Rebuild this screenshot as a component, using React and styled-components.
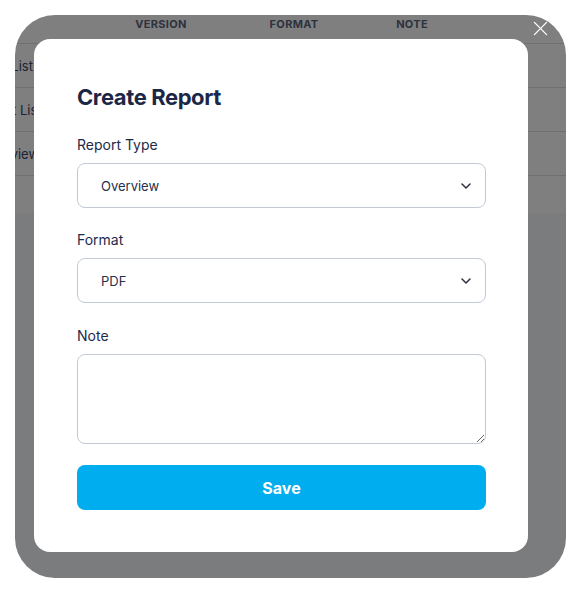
import styled, { createGlobalStyle } from 'styled-components'

const GlobalStyle = createGlobalStyle`
  html, body {
    margin: 0;
    padding: 0;
    background: #ffffff;
  }
  body {
    font-family: Inter, "Noto Sans", sans-serif;
  }
  * {
    box-sizing: border-box;
  }
`

const rows = [
  { name: 'Role List', version: '', format: '', note: '' },
  { name: 'Client List', version: '', format: '', note: '' },
  { name: 'Overview', version: '', format: '', note: '' },
]

const ChevronDown = () => (
  <svg width="10" height="6" viewBox="0 0 10 6" fill="none">
    <path d="M1 1l4 4 4-4" stroke="#2b3040" strokeWidth="1.5" strokeLinecap="round" strokeLinejoin="round" />
  </svg>
)

const CloseIcon = () => (
  <svg width="15" height="15" viewBox="0 0 16 16" fill="none">
    <path d="M1.5 1.5l13 13M14.5 1.5l-13 13" stroke="#ffffff" strokeWidth="1.4" strokeLinecap="round" />
  </svg>
)

const App = () => {
  return (
    <>
      <GlobalStyle />
      <Frame>
        <Table>
          <HeaderRow>
            <span></span>
            <HeadCell>Version</HeadCell>
            <HeadCell>Format</HeadCell>
            <HeadCell>Note</HeadCell>
          </HeaderRow>
          {rows.map((row) => (
            <Row key={row.name}>
              <NameCell>{row.name}</NameCell>
              <Cell>{row.version}</Cell>
              <Cell>{row.format}</Cell>
              <Cell>{row.note}</Cell>
            </Row>
          ))}
          <TableFooter />
        </Table>

        <Overlay>
          <CloseButton aria-label="Close">
            <CloseIcon />
          </CloseButton>
          <Modal>
            <Title>Create Report</Title>

            <Field $space={22}>
              <Label>Report Type</Label>
              <SelectWrap>
                <Select defaultValue="overview">
                  <option value="overview">Overview</option>
                  <option value="detail">Detail</option>
                </Select>
                <Chevron>
                  <ChevronDown />
                </Chevron>
              </SelectWrap>
            </Field>

            <Field $space={23}>
              <Label>Format</Label>
              <SelectWrap>
                <Select defaultValue="pdf">
                  <option value="pdf">PDF</option>
                  <option value="csv">CSV</option>
                </Select>
                <Chevron>
                  <ChevronDown />
                </Chevron>
              </SelectWrap>
            </Field>

            <Field $space={21}>
              <Label>Note</Label>
              <TextArea />
            </Field>

            <SaveButton>Save</SaveButton>
          </Modal>
        </Overlay>
      </Frame>
    </>
  )
}

const Frame = styled.div`
  position: relative;
  margin: 15px;
  height: 563px;
  border-radius: 40px;
  overflow: hidden;
  background: #f6f8fd;
`

const Table = styled.div`
  background: #ffffff;
  margin-left: -34px;
`

const gridCols = `
  display: grid;
  grid-template-columns: 113px 134px 132px 104px 1fr;
`

const HeaderRow = styled.div`
  ${gridCols}
  height: 29px;
  border-bottom: 1px solid #dcdfe6;
  padding-top: 2px;
`

const HeadCell = styled.span`
  font-size: 11px;
  font-weight: 700;
  letter-spacing: 0.3px;
  text-transform: uppercase;
  color: #5c6580;
  text-align: center;
  line-height: 14px;
`

const Row = styled.div`
  ${gridCols}
  height: 44px;
  align-items: center;
  border-bottom: 1px solid #dcdfe6;
`

const NameCell = styled.span`
  font-size: 13px;
  color: #3a4668;
  white-space: nowrap;
`

const Cell = styled.span`
  font-size: 13px;
  color: #3a4668;
  text-align: center;
`

const TableFooter = styled.div`
  height: 37px;
`

const Overlay = styled.div`
  position: absolute;
  inset: 0;
  background: rgba(0, 0, 0, 0.5);
  padding: 24px 38px 0 19px;
`

const CloseButton = styled.button`
  position: absolute;
  top: 3px;
  right: 16px;
  width: 20px;
  height: 20px;
  padding: 0;
  border: none;
  background: transparent;
  display: flex;
  align-items: center;
  justify-content: center;
  cursor: pointer;
`

const Modal = styled.div`
  background: #ffffff;
  border-radius: 16px;
  padding: 44px 42px 42px 43px;
`

const Title = styled.h2`
  margin: 0 0 24px;
  font-size: 22px;
  line-height: 28px;
  font-weight: 700;
  color: #1c2748;
  letter-spacing: -0.4px;
`

const Field = styled.div`
  display: flex;
  flex-direction: column;
  margin-bottom: ${(props) => props.$space}px;
`

const Label = styled.label`
  font-size: 14px;
  line-height: 20px;
  color: #1e2a4a;
  margin-bottom: 8px;
`

const SelectWrap = styled.div`
  position: relative;
`

const Select = styled.select`
  appearance: none;
  width: 100%;
  height: 45px;
  padding: 0 40px 0 23px;
  border: 1px solid #c4c9d6;
  border-radius: 8px;
  background: #ffffff;
  font-family: Inter, "Noto Sans", sans-serif;
  font-size: 13px;
  color: #27304d;
  outline: none;
`

const Chevron = styled.span`
  position: absolute;
  right: 15px;
  top: 50%;
  transform: translateY(-50%);
  display: flex;
  pointer-events: none;
`

const TextArea = styled.textarea`
  width: 100%;
  height: 90px;
  border: 1px solid #c4c9d6;
  border-radius: 8px;
  padding: 10px 14px;
  font-family: Inter, "Noto Sans", sans-serif;
  font-size: 13px;
  outline: none;
  display: block;
`

const SaveButton = styled.button`
  display: block;
  width: 100%;
  height: 45px;
  border: none;
  border-radius: 8px;
  background: #00aeef;
  color: #ffffff;
  font-family: Inter, "Noto Sans", sans-serif;
  font-size: 16px;
  font-weight: 700;
  cursor: pointer;
`

export default App
